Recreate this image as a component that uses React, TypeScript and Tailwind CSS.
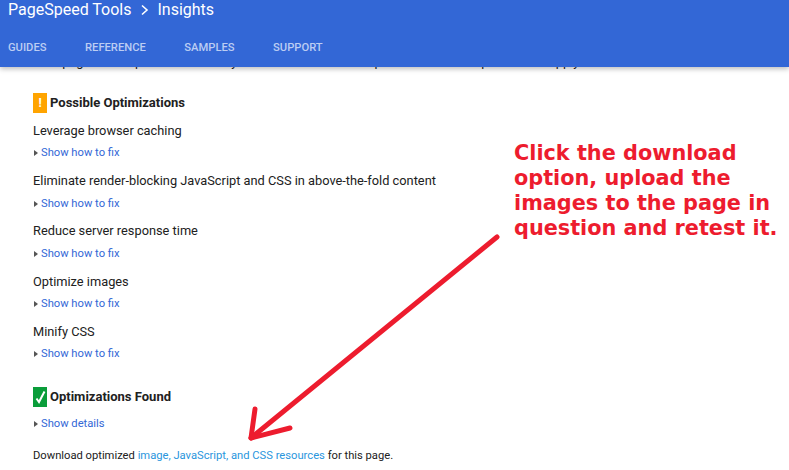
const rules = [
  'Leverage browser caching',
  'Eliminate render-blocking JavaScript and CSS in above-the-fold content',
  'Reduce server response time',
  'Optimize images',
  'Minify CSS',
];

function Toggle({ label }: { label: string }) {
  return (
    <div className="flex items-center h-[16px] text-[11.2px] leading-[16px]">
      <span className="w-0 h-0 ml-[1px] mr-[3px] border-y-[3px] border-y-transparent border-l-[4px] border-l-[#555555]" />
      <a className="text-[#3367d6]">{label}</a>
    </div>
  );
}

export default function App() {
  return (
    <div className="relative w-[789px] h-[470px] overflow-hidden bg-white text-[#212121] font-['Roboto',sans-serif]">
      <header className="relative z-10 h-[67px] bg-[#3367d6] shadow-[0_2px_5px_rgba(0,0,0,0.26)] px-[8px]">
        <div className="flex items-center h-[19px] text-white text-[16px] leading-[19px]">
          <span>PageSpeed Tools</span>
          <svg className="mx-[8.5px]" width="9" height="12" viewBox="0 0 9 12" fill="none" stroke="white" strokeWidth="1.6">
            <path d="M2 1.5 L7 6 L2 10.5" />
          </svg>
          <span>Insights</span>
        </div>
        <nav className="flex gap-[38.5px] mt-[21px] text-[11.2px] leading-[16px] font-medium text-[#bccdf3]">
          <span>GUIDES</span>
          <span>REFERENCE</span>
          <span>SAMPLES</span>
          <span>SUPPORT</span>
        </nav>
      </header>

      <main className="pl-[33px] -mt-[14px] w-[789px]">
        <p className="h-[17px] text-[12.8px] leading-[17px] whitespace-nowrap overflow-hidden">
          Your page should perform better if you make the small fixes pointed out. The top items will apply
        </p>
        <div className="flex items-center h-[20px] mt-[23px] gap-[3px] mb-[9.1px]">
          <span className="flex items-center justify-center w-[14px] h-[20px] bg-[#ffa400] text-white text-[12px] font-bold">!</span>
          <h3 className="text-[13px] font-bold leading-[20px]">Possible Optimizations</h3>
        </div>
        {rules.map((r) => (
          <div key={r} className="h-[50.2px]">
            <div className="h-[18px] text-[12.8px] leading-[18px]">{r}</div>
            <div className="mt-[5.3px]"><Toggle label="Show how to fix" /></div>
          </div>
        ))}
        <div className="flex items-center h-[20px] mt-[13.9px] gap-[3px] mb-[9px]">
          <span className="flex items-center justify-center w-[14px] h-[20px] bg-[#0a9d3a]">
            <svg width="11" height="14" viewBox="0 0 11 14" fill="none" stroke="white" strokeWidth="2">
              <path d="M1.5 8.5 L4 12 L9.5 1.5" />
            </svg>
          </span>
          <h3 className="text-[13px] font-bold leading-[20px]">Optimizations Found</h3>
        </div>
        <Toggle label="Show details" />
        <p className="mt-[16px] text-[11.2px] leading-[16px]">
          Download optimized <a className="text-[#2a96dd]">image, JavaScript, and CSS resources</a> for this page.
        </p>
      </main>

      <div className="absolute left-[514px] top-[141px] text-[20.8px] leading-[25px] font-bold text-[#ed1c2e] font-['DejaVu_Sans',sans-serif] whitespace-nowrap">
        Click the download<br />option, upload the<br />images to the page in<br />question and retest it.
      </div>

      <svg className="absolute left-0 top-0" width="789" height="470" fill="none" stroke="#ed1c2e" strokeWidth="5" strokeLinecap="round" strokeLinejoin="round">
        <path d="M497 237 L251 438" />
        <path d="M255 409 L251 438 L290 428" />
      </svg>
    </div>
  );
}
